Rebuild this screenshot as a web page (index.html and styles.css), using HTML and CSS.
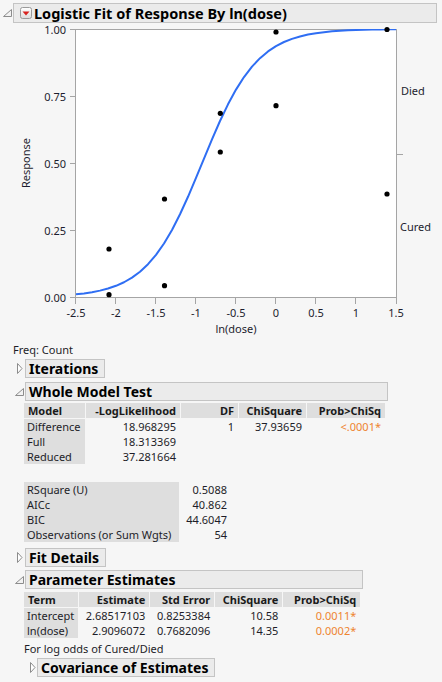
FILE: index.html
```html
<!DOCTYPE html>
<html lang="en">
<head>
<meta charset="utf-8">
<title>Logistic Fit of Response By ln(dose)</title>
<link rel="stylesheet" href="styles.css">
</head>
<body>
<div class="report">
  <div class="node top">
    <div class="head">
      <span class="twisty twisty-top">
        <svg class="tri-open" width="9" height="8" viewBox="0 0 9 8"><polygon points="0.5,7.5 8.5,7.5 8.5,0.5" /></svg>
      </span>
      <div class="title title-top">
        <span class="menu">
          <svg width="12" height="12" viewBox="0 0 12 12">
            <defs><linearGradient id="mg" x1="0" y1="0" x2="0" y2="1"><stop offset="0" stop-color="#ffffff"/><stop offset="1" stop-color="#dcdcdc"/></linearGradient></defs>
            <rect x="0.5" y="0.5" width="11" height="11" rx="2" fill="url(#mg)" stroke="#9a9a9a"/>
            <path d="M2.5 4.5 H9.5 L6 8.5 Z" fill="#d8231f"/>
          </svg>
        </span>
        <span>Logistic Fit of Response By ln(dose)</span>
      </div>
    </div>
    <div class="body body-top">
      <svg class="chart" width="442" height="315" viewBox="0 0 442 315">
        <defs><clipPath id="pc"><rect x="76" y="6" width="321" height="269"/></clipPath></defs>
        <rect x="75.5" y="6.5" width="321" height="268" fill="#ffffff" stroke="#a5a5a5"/>
        <path d="M70 6.5H75 M70 73.5H75 M70 140.5H75 M70 207.5H75 M70 274.5H75 M75.5 275V281 M115.5 275V281 M155.5 275V281 M195.5 275V281 M235.5 275V281 M275.5 275V281 M315.5 275V281 M355.5 275V281 M396.5 275V281 M397 131.5H403" stroke="#a5a5a5" fill="none"/>
        <polyline clip-path="url(#pc)" fill="none" stroke="#2f6ef3" stroke-width="2" stroke-linejoin="round" points="76,271.30 84,270.41 92,269.21 100,267.64 108,265.55 116,262.82 124,259.25 132,254.62 140,248.70 148,241.20 156,231.88 164,220.49 172,206.93 180,191.28 188,173.79 196,154.98 204,135.53 212,116.30 220,98.02 228,81.31 236,66.60 244,54.05 252,43.62 260,35.15 268,28.41 276,23.11 284,19.00 292,15.84 300,13.42 308,11.59 316,10.20 324,9.20 332,8.36 340,7.80 348,7.33 356,7.00 364,6.74 372,6.55 380,6.42 388,6.30 396,6.23"/>
        <g fill="#000000">
          <circle cx="109" cy="226" r="2.6"/>
          <circle cx="109" cy="271.7" r="2.6"/>
          <circle cx="164.5" cy="176" r="2.6"/>
          <circle cx="164.5" cy="262.7" r="2.6"/>
          <circle cx="220.3" cy="90.3" r="2.6"/>
          <circle cx="220.3" cy="129" r="2.6"/>
          <circle cx="276" cy="9" r="2.6"/>
          <circle cx="276" cy="82.7" r="2.6"/>
          <circle cx="387" cy="6.5" r="2.6"/>
          <circle cx="387" cy="171" r="2.6"/>
        </g>
        <g class="axis-text">
          <text x="66" y="10.5" text-anchor="end">1.00</text>
          <text x="66" y="77.5" text-anchor="end">0.75</text>
          <text x="66" y="144.5" text-anchor="end">0.50</text>
          <text x="66" y="211.5" text-anchor="end">0.25</text>
          <text x="66" y="278.5" text-anchor="end">0.00</text>
          <text x="76" y="294" text-anchor="middle">-2.5</text>
          <text x="116" y="294" text-anchor="middle">-2</text>
          <text x="156" y="294" text-anchor="middle">-1.5</text>
          <text x="196" y="294" text-anchor="middle">-1</text>
          <text x="236" y="294" text-anchor="middle">-0.5</text>
          <text x="276" y="294" text-anchor="middle">0</text>
          <text x="316" y="294" text-anchor="middle">0.5</text>
          <text x="356" y="294" text-anchor="middle">1</text>
          <text x="396" y="294" text-anchor="middle">1.5</text>
          <text x="236" y="310" text-anchor="middle">ln(dose)</text>
          <text transform="translate(30 140) rotate(-90)" text-anchor="middle">Response</text>
          <text x="401" y="72">Died</text>
          <text x="400" y="208">Cured</text>
        </g>
      </svg>
      <div class="freq">Freq: Count</div>

      <div class="node sub closed-node gap-iter">
        <div class="head">
          <span class="twisty"><svg class="tri-closed" width="6" height="11" viewBox="0 0 6 11"><polygon points="0.5,0.5 5,5.5 0.5,10.5"/></svg></span>
          <div class="title">Iterations</div>
        </div>
      </div>

      <div class="node sub gap-wmt">
        <div class="head">
          <span class="twisty"><svg class="tri-open" width="9" height="8" viewBox="0 0 9 8"><polygon points="0.5,7.5 8.5,7.5 8.5,0.5"/></svg></span>
          <div class="title">Whole Model Test</div>
        </div>
        <div class="body">
          <table class="tbl t1">
            <thead>
              <tr>
                <th class="l w61">Model</th>
                <th class="w94">-LogLikelihood</th>
                <th class="w57">DF</th>
                <th class="w67">ChiSquare</th>
                <th class="w78">Prob&gt;ChiSq</th>
              </tr>
            </thead>
            <tbody>
              <tr><td class="lab">Difference</td><td>18.968295</td><td>1</td><td>37.93659</td><td class="orange">&lt;.0001*</td></tr>
              <tr><td class="lab">Full</td><td>18.313369</td><td></td><td></td><td></td></tr>
              <tr><td class="lab">Reduced</td><td>37.281664</td><td></td><td></td><td></td></tr>
            </tbody>
          </table>
          <table class="tbl t2">
            <tbody>
              <tr><td class="lab w155">RSquare (U)</td><td class="w51">0.5088</td></tr>
              <tr><td class="lab">AICc</td><td>40.862</td></tr>
              <tr><td class="lab">BIC</td><td>44.6047</td></tr>
              <tr><td class="lab">Observations (or Sum Wgts)</td><td>54</td></tr>
            </tbody>
          </table>
        </div>
      </div>

      <div class="node sub closed-node gap-fit">
        <div class="head">
          <span class="twisty"><svg class="tri-closed" width="6" height="11" viewBox="0 0 6 11"><polygon points="0.5,0.5 5,5.5 0.5,10.5"/></svg></span>
          <div class="title">Fit Details</div>
        </div>
      </div>

      <div class="node sub gap-pe">
        <div class="head">
          <span class="twisty"><svg class="tri-open" width="9" height="8" viewBox="0 0 9 8"><polygon points="0.5,7.5 8.5,7.5 8.5,0.5"/></svg></span>
          <div class="title">Parameter Estimates</div>
        </div>
        <div class="body">
          <table class="tbl t3">
            <thead>
              <tr>
                <th class="l w54">Term</th>
                <th class="w70">Estimate</th>
                <th class="w64">Std Error</th>
                <th class="w67">ChiSquare</th>
                <th class="w77">Prob&gt;ChiSq</th>
              </tr>
            </thead>
            <tbody>
              <tr><td class="lab">Intercept</td><td>2.68517103</td><td>0.8253384</td><td>10.58</td><td class="orange">0.0011*</td></tr>
              <tr><td class="lab">ln(dose)</td><td>2.9096072</td><td>0.7682096</td><td>14.35</td><td class="orange">0.0002*</td></tr>
            </tbody>
          </table>
          <div class="note">For log odds of Cured/Died</div>
          <div class="node sub3 closed-node">
            <div class="head">
              <span class="twisty"><svg class="tri-closed" width="6" height="11" viewBox="0 0 6 11"><polygon points="0.5,0.5 5,5.5 0.5,10.5"/></svg></span>
              <div class="title">Covariance of Estimates</div>
            </div>
          </div>
        </div>
      </div>
    </div>
  </div>
</div>
</body>
</html>
```

FILE: styles.css
```css
html, body {
  margin: 0;
  padding: 0;
}

body {
  background: #f6f6f6;
  width: 442px;
  height: 682px;
  overflow: hidden;
  font-family: "Noto Sans", "Open Sans", sans-serif;
  font-size: 11px;
  color: #1d1d28;
}

.report {
  padding-top: 3px;
}

.node {
  display: flex;
  flex-direction: column;
  width: fit-content;
}

.node.top {
  width: 437px;
}

.head {
  display: flex;
  align-items: center;
}

.twisty {
  flex: none;
  width: 12px;
  height: 19px;
  display: flex;
  align-items: center;
}

.twisty-top {
  width: 13px;
  height: 20px;
  padding-left: 3px;
  box-sizing: border-box;
}

.sub .twisty {
  padding-left: 2px;
  box-sizing: border-box;
}

.closed-node .twisty {
  padding-left: 4px;
}

.tri-open polygon {
  fill: #f2f2f2;
  stroke: #8c8c8c;
  stroke-width: 1;
}

.tri-closed polygon {
  fill: #ffffff;
  stroke: #8c8c8c;
  stroke-width: 1;
}

.title {
  flex: 1;
  box-sizing: border-box;
  height: 19px;
  border: 1px solid #c4c4c4;
  background: #ebebeb;
  font-weight: bold;
  font-size: 14px;
  line-height: 17px;
  padding: 0 6px 0 3px;
  white-space: nowrap;
  color: #000000;
}

.title-top {
  height: 20px;
  line-height: 18px;
  padding-left: 6px;
  display: flex;
  align-items: center;
  gap: 2px;
  font-size: 14.5px;
}

.menu {
  display: flex;
  width: 12px;
  height: 12px;
}

.body-top {
  display: flex;
  flex-direction: column;
}

.chart {
  display: block;
}

.axis-text text {
  font-family: "Noto Sans", "Open Sans", sans-serif;
  font-size: 11px;
  fill: #1d1d2e;
}

.freq {
  margin-top: 5px;
  padding-left: 13px;
  line-height: 14px;
}

.sub {
  margin-left: 13px;
}

.sub > .body {
  padding: 0 2px 0 11px;
  display: flex;
  flex-direction: column;
  align-items: flex-start;
}

.gap-iter { margin-top: 2px; }
.gap-wmt { margin-top: 4px; }
.gap-fit { margin-top: 6px; }
.gap-pe { margin-top: 3px; }

.tbl {
  border-collapse: separate;
  border-spacing: 1px 0;
  margin-left: -1px;
  font-size: 11px;
  line-height: 15px;
}

.tbl th,
.tbl td {
  box-sizing: border-box;
  padding: 0 4px;
  height: 15px;
  white-space: nowrap;
  text-align: right;
  font-weight: normal;
}

.tbl th {
  background: #dedede;
  background-clip: padding-box;
  border-bottom: 1px solid transparent;
  height: 16px;
  font-weight: bold;
  color: #1a1a1a;
}

.tbl th.l {
  text-align: left;
  padding-left: 4px;
}

.tbl td.lab {
  background: #dedede;
  text-align: left;
  padding-left: 3px;
}

.t1 { margin-top: 2px; }
.t2 { margin-top: 18px; }
.t3 { margin-top: 3px; }

.w51 { width: 51px; }
.w54 { width: 54px; }
.w57 { width: 57px; }
.w61 { width: 61px; }
.w64 { width: 64px; }
.w67 { width: 67px; }
.w70 { width: 70px; }
.w77 { width: 77px; }
.w78 { width: 78px; }
.w94 { width: 94px; }
.w155 { width: 155px; }

.orange {
  color: #ee8430;
}

.note {
  margin-top: 4px;
  line-height: 14px;
}

.sub3 {
  margin-top: 2px;
  margin-left: 1px;
}

.sub3 .twisty {
  padding-left: 5px;
}
```
